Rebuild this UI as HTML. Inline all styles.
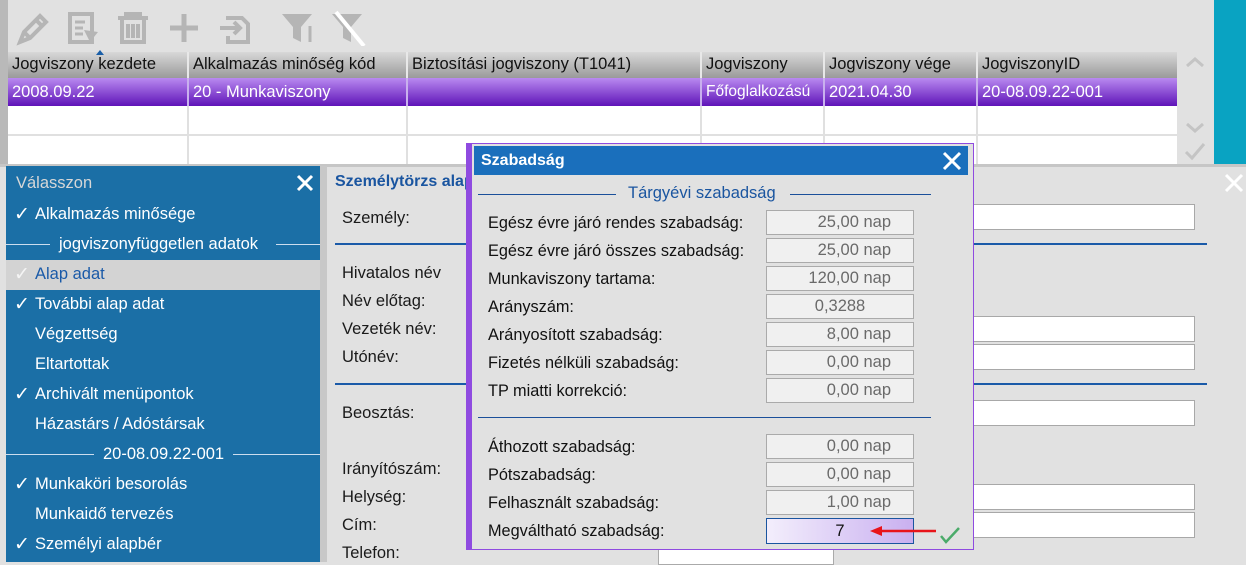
<!DOCTYPE html>
<html><head><meta charset="utf-8"><style>
*{margin:0;padding:0;box-sizing:border-box}
body{width:1246px;height:562px;overflow:hidden;background:#e1e1e1;font-family:"Liberation Sans",sans-serif;font-size:16.5px;color:#1a1a1a;position:relative}
.a{position:absolute;white-space:nowrap}
.hd{top:52px;height:26px;background:linear-gradient(#d8d8d8,#9a9a9a);}
.hc{position:absolute;top:0;height:26px;line-height:24px;padding-left:4px;border-right:2px solid #e8e8e8;color:#111}
.rc{position:absolute;height:28px;line-height:28px;padding-left:4px;border-right:2px solid #e0e0e0}
.menu .it{position:absolute;left:35px;color:#fff;font-size:16.5px}
.ck{position:absolute;left:8px;color:#fff;font-size:19px}
.lbl{position:absolute;left:342px;font-size:16.5px}
.inp{position:absolute;left:940px;width:255px;height:26px;background:#fff;border:1px solid #a8a8a8}
.dl{position:absolute;left:16px;font-size:16.3px;color:#111}
.vb{position:absolute;left:294px;width:148px;height:25px;background:#f0f0f0;border:1px solid #aaa;text-align:right;padding-right:22px;line-height:23px;color:#6a6a6a;font-size:16.5px}
</style></head><body>
<div class="a" style="left:0;top:0;width:8px;height:166px;background:#b9b9b9"></div>
<svg class="a" style="left:14px;top:10px" width="360" height="36" viewBox="0 0 360 36" fill="none" stroke="#b5b5b5" stroke-width="4">
<path d="M6 32 L10 22 L26 6 L32 12 L16 28 Z M10 22 L16 28 M22 10 L28 16"/>
<rect x="56" y="4" width="22" height="28" /><path d="M61 12h10M61 18h8M61 24h8" stroke-width="3"/><path d="M70 20 L84 22 L76 32" fill="#b5b5b5" stroke="none"/>
<path d="M104 8h30M112 8V4h14v4M108 10v22h22V10M114 14v14M119 14v14M124 14v14"/>
<path d="M170 4v28M156 18h28" stroke-width="5"/>
<path d="M212 8h16l6 6v18h-20v-6M212 18h14M220 12l6 6-6 6" /><path d="M206 18h8"/>
<path d="M268 4h30l-11 13v15l-8-4V17Z" fill="#b5b5b5" stroke="none"/><path d="M296 16v16" stroke-width="3"/>
<path d="M318 4h30l-11 13v15l-8-4V17Z" fill="#b5b5b5" stroke="none"/><path d="M322 2 L350 36" stroke="#fff" stroke-width="4"/>
</svg>
<div class="a hd" style="left:8px;width:1169px">
<div class="hc" style="left:0;width:181px">Jogviszony kezdete</div>
<div class="hc" style="left:181px;width:219px">Alkalmazás minőség kód</div>
<div class="hc" style="left:400px;width:294px">Biztosítási jogviszony (T1041)</div>
<div class="hc" style="left:694px;width:123px">Jogviszony</div>
<div class="hc" style="left:817px;width:153px">Jogviszony vége</div>
<div class="hc" style="left:970px;width:199px;border:0">JogviszonyID</div>
</div>
<div class="a" style="left:96px;top:50px;width:0;height:0;border-left:4px solid transparent;border-right:4px solid transparent;border-bottom:5px solid #1a5fa8"></div>
<div class="a" style="left:8px;top:78px;width:1169px;height:28px;background:linear-gradient(#b98af0,#5f14b8);color:#fff">
<div class="rc" style="left:0;width:181px;border-color:#c9b0ee">2008.09.22</div>
<div class="rc" style="left:181px;width:219px;border-color:#c9b0ee">20 - Munkaviszony</div>
<div class="rc" style="left:400px;width:294px;border-color:#c9b0ee"></div>
<div class="rc" style="left:694px;width:123px;border-color:#c9b0ee;font-size:15.5px">Főfoglalkozású</div>
<div class="rc" style="left:817px;width:153px;border-color:#c9b0ee">2021.04.30</div>
<div class="rc" style="left:970px;width:199px;border:0">20-08.09.22-001</div>
</div>
<div class="a" style="left:8px;top:106px;width:1169px;height:58px;background:#fff">
<div class="rc" style="left:0;width:181px;height:58px"></div>
<div class="rc" style="left:181px;width:219px;height:58px"></div>
<div class="rc" style="left:400px;width:294px;height:58px"></div>
<div class="rc" style="left:694px;width:123px;height:58px"></div>
<div class="rc" style="left:817px;width:153px;height:58px"></div>
<div class="a" style="left:0;top:28px;width:1169px;height:2px;background:#e0e0e0"></div>
</div>
<svg class="a" style="left:1180px;top:52px" width="30" height="114" fill="none" stroke="#c4c4c4" stroke-width="3"><path d="M7 14l8-7 8 7M7 72l8 7 8-7M6 100l6 6 12-14"/></svg>
<div class="a" style="left:1214px;top:0;width:32px;height:166px;background:#09a3c2"></div>
<div class="a" style="left:0;top:164px;width:1246px;height:3px;background:#c6c6c6"></div>
<div class="a menu" style="left:6px;top:166px;width:314px;height:396px;background:#1b6fa6">
<div class="a" style="left:10px;top:8px;color:#d7d7d7;font-size:16.5px">Válasszon</div>
<svg class="a" style="left:290px;top:8px" width="18" height="18" stroke="#fff" stroke-width="3"><path d="M2 2L16 16M16 2L2 16"/></svg>
<span class="ck" style="top:37px">✓</span><span class="it" style="left:29px;top:39px">Alkalmazás minősége</span>
<div class="a" style="left:0;top:78px;width:44px;height:1px;background:#cde"></div>
<span class="it" style="left:53px;top:69px">jogviszonyfüggetlen adatok</span>
<div class="a" style="left:270px;top:78px;width:44px;height:1px;background:#cde"></div>
<div class="a" style="left:0;top:94px;width:314px;height:30px;background:#d3d3d3"></div>
<span class="ck" style="top:97px;color:#f4f4f4">✓</span><span class="it" style="left:29px;top:99px;color:#1a5aa8">Alap adat</span>
<span class="ck" style="top:127px">✓</span><span class="it" style="left:29px;top:129px">További alap adat</span>
<span class="it" style="left:29px;top:159px">Végzettség</span>
<span class="it" style="left:29px;top:189px">Eltartottak</span>
<span class="ck" style="top:217px">✓</span><span class="it" style="left:29px;top:219px">Archivált menüpontok</span>
<span class="it" style="left:29px;top:249px">Házastárs / Adóstársak</span>
<div class="a" style="left:0;top:288px;width:88px;height:1px;background:#cde"></div>
<span class="it" style="left:97px;top:279px">20-08.09.22-001</span>
<div class="a" style="left:227px;top:288px;width:87px;height:1px;background:#cde"></div>
<span class="ck" style="top:307px">✓</span><span class="it" style="left:29px;top:309px">Munkaköri besorolás</span>
<span class="it" style="left:29px;top:339px">Munkaidő tervezés</span>
<span class="ck" style="top:367px">✓</span><span class="it" style="left:29px;top:369px">Személyi alapbér</span>
</div>
<div class="a" style="left:320px;top:166px;width:7px;height:396px;background:#c8c8c8"></div>
<div class="a" style="left:335px;top:173px;color:#1a55a0;font-weight:bold;font-size:16px">Személytörzs alap</div>
<svg class="a" style="left:1224px;top:173px" width="20" height="20" stroke="#fff" stroke-width="3"><path d="M2 2L18 18M18 2L2 18"/></svg>
<div class="lbl" style="top:209px">Személy:</div>
<div class="a" style="left:335px;top:243px;width:872px;height:2px;background:#1a5aa8"></div>
<div class="lbl" style="top:264px">Hivatalos név</div>
<div class="lbl" style="top:292px">Név előtag:</div>
<div class="lbl" style="top:320px">Vezeték név:</div>
<div class="lbl" style="top:348px">Utónév:</div>
<div class="a" style="left:335px;top:383px;width:872px;height:2px;background:#1a5aa8"></div>
<div class="lbl" style="top:404px">Beosztás:</div>
<div class="lbl" style="top:460px">Irányítószám:</div>
<div class="lbl" style="top:488px">Helység:</div>
<div class="lbl" style="top:516px">Cím:</div>
<div class="lbl" style="top:544px">Telefon:</div>
<div class="inp" style="top:204px"></div>
<div class="inp" style="top:316px"></div>
<div class="inp" style="top:344px"></div>
<div class="inp" style="top:400px"></div>
<div class="inp" style="top:484px"></div>
<div class="inp" style="top:512px"></div>
<div class="a" style="left:658px;top:545px;width:176px;height:20px;background:#fff;border:1px solid #aaa"></div>
<div class="a" style="left:466px;top:143px;width:508px;height:407px;background:#e1e1e1;border:1px solid #8f4be0;border-left:6px solid #8f4be0">
<div class="a" style="left:2px;top:2px;width:494px;height:29px;background:#1a6fbc">
<div class="a" style="left:7px;top:6px;color:#fff;font-weight:bold;font-size:16px">Szabadság</div>
<svg class="a" style="left:468px;top:5px" width="20" height="20" stroke="#fff" stroke-width="3"><path d="M2 2L18 18M18 2L2 18"/></svg>
</div>
<div class="a" style="left:6px;top:50px;width:138px;height:1px;background:#1a4f9a"></div>
<div class="a" style="left:156px;top:40px;color:#1a55a0;font-size:16.5px">Tárgyévi szabadság</div>
<div class="a" style="left:318px;top:50px;width:141px;height:1px;background:#1a4f9a"></div>
<div class="dl" style="top:70px">Egész évre járó rendes szabadság:</div><div class="vb" style="top:66px">25,00 nap</div>
<div class="dl" style="top:98px">Egész évre járó összes szabadság:</div><div class="vb" style="top:94px">25,00 nap</div>
<div class="dl" style="top:126px">Munkaviszony tartama:</div><div class="vb" style="top:122px">120,00 nap</div>
<div class="dl" style="top:154px">Arányszám:</div><div class="vb" style="top:150px;padding-right:0;text-align:center">0,3288</div>
<div class="dl" style="top:182px">Arányosított szabadság:</div><div class="vb" style="top:178px">8,00 nap</div>
<div class="dl" style="top:210px">Fizetés nélküli szabadság:</div><div class="vb" style="top:206px">0,00 nap</div>
<div class="dl" style="top:238px">TP miatti korrekció:</div><div class="vb" style="top:234px">0,00 nap</div>
<div class="a" style="left:6px;top:273px;width:453px;height:1px;background:#1a4f9a"></div>
<div class="dl" style="top:294px">Áthozott szabadság:</div><div class="vb" style="top:290px">0,00 nap</div>
<div class="dl" style="top:322px">Pótszabadság:</div><div class="vb" style="top:318px">0,00 nap</div>
<div class="dl" style="top:350px">Felhasznált szabadság:</div><div class="vb" style="top:346px">1,00 nap</div>
<div class="dl" style="top:378px">Megváltható szabadság:</div>
<div class="vb" style="top:374px;height:26px;background:linear-gradient(90deg,#f3eefc,#c9b0f0);border-color:#1a55a0;color:#111;text-align:center;padding-right:0;line-height:24px">7</div>
<svg class="a" style="left:398px;top:379px" width="68" height="16"><path d="M8 8H66" stroke="#e8141a" stroke-width="2.5"/><path d="M0 8L12 3V13Z" fill="#e8141a"/></svg>
<svg class="a" style="left:467px;top:382px" width="22" height="18" fill="none" stroke="#4bab6a" stroke-width="2.5"><path d="M2 10l5 6L20 2"/></svg>
</div>
</body></html>
